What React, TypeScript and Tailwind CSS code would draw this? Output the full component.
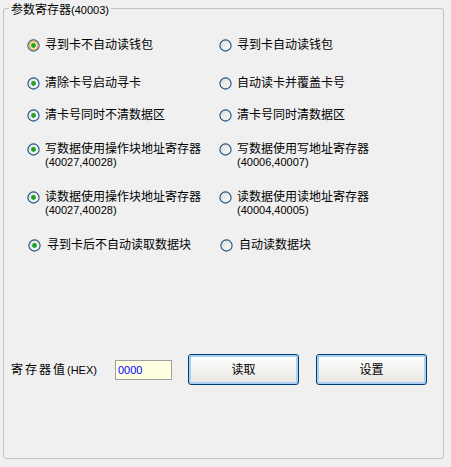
import React, { FC } from "react";

const FONT = { fontFamily: '"Liberation Sans", "Noto Sans CJK SC", sans-serif' };

type RadioProps = { checked?: boolean; focused?: boolean };

const RadioDot: FC<RadioProps> = ({ checked, focused }) => (
  <svg width="13" height="13" viewBox="0 0 13 13" className="shrink-0">
    <defs>
      <linearGradient id="rg" x1="0" y1="0" x2="1" y2="1">
        <stop offset="0" stopColor="#dcdcd6" />
        <stop offset="1" stopColor="#ffffff" />
      </linearGradient>
    </defs>
    <circle cx="6.5" cy="6.5" r="5.6" fill="url(#rg)" stroke="#1c5180" strokeWidth="1.1" />
    {focused && <circle cx="6.5" cy="6.5" r="4.2" fill="none" stroke="#f5b445" strokeWidth="1.6" />}
    {checked && <circle cx="6.5" cy="6.5" r="2.4" fill="#22a022" />}
  </svg>
);

type Opt = { label: string; sub?: string; checked?: boolean; focused?: boolean };

const RadioItem: FC<Opt & { shift?: boolean }> = ({ label, sub, checked, focused, shift }) => (
  <div className={`flex items-start gap-[5px] ${shift ? "pl-[1px]" : ""}`}>
    <div className="pt-[0.5px]">
      <RadioDot checked={checked} focused={focused} />
    </div>
    <div className={`flex flex-col ${shift ? "pl-[1px]" : ""}`}>
      <span className="leading-[14px] text-[12px]">{label}</span>
      {sub && <span className="leading-[13px] text-[11px]">{sub}</span>}
    </div>
  </div>
);

const rows: { left: Opt; right: Opt; className: string; shift?: boolean }[] = [
  {
    left: { label: "寻到卡不自动读钱包", checked: true, focused: true },
    right: { label: "寻到卡自动读钱包" },
    className: "",
  },
  {
    left: { label: "清除卡号启动寻卡", checked: true },
    right: { label: "自动读卡并覆盖卡号" },
    className: "mt-[24px]",
  },
  {
    left: { label: "清卡号同时不清数据区", checked: true },
    right: { label: "清卡号同时清数据区" },
    className: "mt-[18px]",
  },
  {
    left: { label: "写数据使用操作块地址寄存器", sub: "(40027,40028)", checked: true },
    right: { label: "写数据使用写地址寄存器", sub: "(40006,40007)" },
    className: "mt-[20px]",
  },
  {
    left: { label: "读数据使用操作块地址寄存器", sub: "(40027,40028)", checked: true },
    right: { label: "读数据使用读地址寄存器", sub: "(40004,40005)" },
    className: "mt-[21px]",
  },
  {
    left: { label: "寻到卡后不自动读取数据块", checked: true },
    right: { label: "自动读数据块" },
    className: "mt-[21px]",
    shift: true,
  },
];

const WinButton: FC<{ label: string }> = ({ label }) => (
  <button className="w-[111px] h-[31px] rounded-[3px] border border-[#003c74] bg-linear-to-b from-[#ffffff] to-[#e8e7e2] shadow-[inset_0_0_0_2px_#a9d0f5] text-[12px] text-black">
    {label}
  </button>
);

export default function App() {
  return (
    <div className="w-[451px] h-[467px] bg-[#f0f0f0] pt-[8px] pl-[3px] text-black" style={FONT}>
      <div className="relative w-[441px] h-[451px] border border-[#c2c2c2] rounded-[3px]">
        <span className="absolute -top-[6px] left-[5px] px-[2px] bg-[#f0f0f0] leading-[14px] text-[12px]">
          参数寄存器<span className="text-[11px]">(40003)</span>
        </span>

        <div className="pt-[29px] pl-[23px]">
          {rows.map((row, i) => (
            <div key={i} className={`grid grid-cols-[192px_1fr] ${row.className}`}>
              <RadioItem {...row.left} shift={row.shift} />
              <RadioItem {...row.right} shift={row.shift} />
            </div>
          ))}
        </div>

        <div className="mt-[102px] pl-[7px] flex items-center h-[31px]">
          <div className="w-[104px] text-[12px] leading-[14px]">
            <span className="tracking-[2px]">寄存器值</span>
            <span className="text-[11px]">(HEX)</span>
          </div>
          <div className="w-[57px] h-[20px] border border-[#a0a0a0] bg-[#ffffe1] text-[#0000ff] text-[11px] leading-[18px] pl-[2px]">
            0000
          </div>
          <div className="ml-[16px]">
            <WinButton label="读取" />
          </div>
          <div className="ml-[17px]">
            <WinButton label="设置" />
          </div>
        </div>
      </div>
    </div>
  );
}
